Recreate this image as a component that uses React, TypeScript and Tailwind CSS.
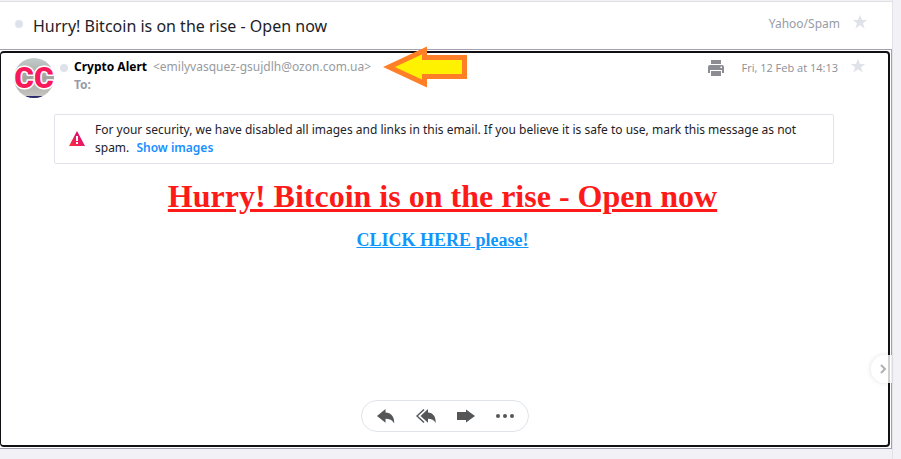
import React from 'react';

function Star() {
  return (
    <svg viewBox="0 0 16 16" className="size-4 fill-[#dfe2e8]" aria-hidden="true">
      <path d="M8 1l2 5h5.200l-4.200 3.200 1.600 5.200L8 11.300l-4.600 3.100L5 9.200.8 6H6z" />
    </svg>
  );
}

function Avatar() {
  return (
    <svg viewBox="0 0 40 40" className="size-10 shrink-0" role="img" aria-label="CC">
      <defs>
        <linearGradient id="avatar-bg" x1="0" y1="0" x2="0" y2="1">
          <stop offset="0" stopColor="#c3cdcd" />
          <stop offset="0.5" stopColor="#a5a39d" />
          <stop offset="1" stopColor="#c9c8c6" />
        </linearGradient>
        <clipPath id="avatar-clip">
          <circle cx="20" cy="20" r="20" />
        </clipPath>
      </defs>
      <g clipPath="url(#avatar-clip)">
        <rect width="40" height="40" fill="url(#avatar-bg)" />
        <rect x="10" y="38" width="20" height="2" fill="#29286b" />
      </g>
      <text
        x="20"
        y="30"
        textAnchor="middle"
        fontSize="30"
        stroke="#fff"
        strokeWidth="3"
        strokeLinejoin="round"
        paintOrder="stroke"
        fill="#f8195b"
        className="font-[Roboto,sans-serif] font-black"
      >
        CC
      </text>
    </svg>
  );
}

function PointerArrow() {
  return (
    <svg viewBox="0 0 84 42" className="absolute -top-[12px] left-full ml-3 h-[42px] w-[84px]" aria-hidden="true">
      <path
        d="M6 21L41.500 4.500v7h40v19h-40v7z"
        fill="#fff200"
        stroke="#ff7f27"
        strokeWidth="5"
      />
    </svg>
  );
}

function Warning() {
  return (
    <svg viewBox="0 0 16 16" className="size-4 shrink-0" aria-hidden="true">
      <defs>
        <linearGradient id="warn" x1="0" y1="1" x2="1" y2="0">
          <stop offset="0" stopColor="#ff333a" />
          <stop offset="1" stopColor="#cc0088" />
        </linearGradient>
      </defs>
      <path d="M8 0l8 15H0z" fill="url(#warn)" />
      <path d="M7 5h2v5H7zM7 11h2v2H7z" fill="#fff" />
    </svg>
  );
}

function Printer() {
  return (
    <svg viewBox="0 0 16 16" className="size-4 fill-[#8b8d92]" aria-hidden="true">
      <path d="M3 0h10v4H3z" />
      <path fillRule="evenodd" d="M2 5h12a2 2 0 012 2v6h-2v-3H2v3H0V7a2 2 0 012-2zm10.500 1.500v1.500h1.500V6.500z" />
      <path d="M3 11h10v5H3z" />
    </svg>
  );
}

function Reply() {
  return (
    <svg viewBox="0 0 18 16" className="h-4 w-[18px] fill-[#555658]" aria-hidden="true">
      <path d="M8.500 1v3.500c5.500.2 9 4 8.700 11-1.700-3.500-4.700-4.700-8.700-4.700v4L0 8z" />
    </svg>
  );
}

function ReplyAll() {
  return (
    <svg viewBox="0 0 20 16" className="h-4 w-5 fill-[#555658]" aria-hidden="true">
      <path d="M12 1v3.500c5 .2 8 4 7.700 10.500-1.700-3.200-4.200-4.200-7.700-4.200v4L4.500 8z" />
      <path d="M8 1.500L1 8l7 6.500" fill="none" stroke="#555658" strokeWidth="1.500" />
    </svg>
  );
}

function Forward() {
  return (
    <svg viewBox="0 0 18 16" className="h-4 w-[18px] fill-[#555658]" aria-hidden="true">
      <path d="M9 1.500L18 8l-9 6.500V12H0V4h9z" />
    </svg>
  );
}

function More() {
  return (
    <svg viewBox="0 0 18 16" className="h-4 w-[18px] fill-[#555658]" aria-hidden="true">
      <circle cx="2" cy="8" r="2" />
      <circle cx="9" cy="8" r="2" />
      <circle cx="16" cy="8" r="2" />
    </svg>
  );
}

export default function App() {
  return (
    <div className="flex min-h-screen bg-[#f2f2f6] font-['Noto_Sans','Open_Sans',sans-serif] text-[12px] text-[#1d2228]">
      <main className="relative flex min-w-0 flex-1 flex-col border-r border-[#e0e4e9] pb-[10px]">
        <header className="mt-px flex h-12 items-start border-t border-[#e0e0e2] bg-white pr-6 pl-[15px]">
          <span className="mt-[18px] size-2 shrink-0 rounded-full bg-[#dfe2ea]" />
          <h1 className="mt-3 ml-[10px] flex-1 text-[16px] leading-6">Hurry! Bitcoin is on the rise - Open now</h1>
          <span className="mt-3 leading-5 text-[#979ba7]">Yahoo/Spam</span>
          <button type="button" aria-label="Star conversation" className="mt-3 ml-3">
            <Star />
          </button>
        </header>

        <div className="flex flex-1 flex-col border-y border-r border-[#a3a1b0] bg-white py-px pr-px">
          <article className="flex flex-1 flex-col rounded-[4px] border-2 border-l border-[#101014]">
            <div className="flex items-start pt-[5px] pr-[22px] pl-[13px]">
              <Avatar />
              <span className="mt-[6px] ml-[6px] size-2 shrink-0 rounded-full bg-[#dfe2ea]" />
              <div className="ml-[6px] flex-1 leading-[18px]">
                <div className="flex">
                  <div className="relative flex gap-[6px]">
                    <strong className="font-bold text-black">Crypto Alert</strong>
                    <span className="text-[#979ba0]">&lt;emilyvasquez-gsujdlh@ozon.com.ua&gt;</span>
                    <PointerArrow />
                  </div>
                </div>
                <div className="font-bold text-[#979ba7]">To:</div>
              </div>
              <button type="button" aria-label="Print" className="mt-[2px]">
                <Printer />
              </button>
              <time className="ml-[18px] font-['Open_Sans',sans-serif] text-[11px] leading-[20px] text-[#8b8f98]">
                Fri, 12 Feb at 14:13
              </time>
              <button type="button" aria-label="Star message" className="ml-3">
                <Star />
              </button>
            </div>

            <div className="mt-4 mr-[54px] ml-[53px] flex h-[50px] items-center rounded-[2px] border border-[#e0e4e9] pr-5 pl-[14px]">
              <Warning />
              <p className="ml-[10px] leading-[18px]">
                For your security, we have disabled all images and links in this email. If you believe it is safe to
                use, mark this message as not spam.{' '}
                <a href="#images" className="ml-1 inline-block font-semibold text-[#188fff]">
                  Show images
                </a>
              </p>
            </div>

            <div className="mt-3 mr-1 text-center font-['Liberation_Serif',serif] font-bold">
              <h2 className="text-[32px] leading-10 text-[#ff1a1a] underline">Hurry! Bitcoin is on the rise - Open now</h2>
              <p className="mt-3 text-[18px] leading-6">
                <a href="#offer" className="text-[#0f96fb] underline">
                  CLICK HERE please!
                </a>
              </p>
            </div>

            <div className="mt-auto mb-[13px] flex justify-center">
              <div className="flex h-8 items-center gap-[21px] rounded-full border border-[#e0e4e9] pr-[14px] pl-[15px]">
                <button type="button" aria-label="Reply">
                  <Reply />
                </button>
                <button type="button" aria-label="Reply all">
                  <ReplyAll />
                </button>
                <button type="button" aria-label="Forward">
                  <Forward />
                </button>
                <button type="button" aria-label="More">
                  <More />
                </button>
              </div>
            </div>
          </article>
        </div>

        <button
          type="button"
          aria-label="Show side panel"
          className="absolute right-0 bottom-[76px] flex h-7 w-[21px] items-center rounded-l-full bg-white/80 pl-2 shadow-[-1px_0_4px_rgba(0,0,0,0.1)]"
        >
          <svg viewBox="0 0 8 10" className="h-[10px] w-2" fill="none" stroke="#b0b0b4" strokeWidth="2" aria-hidden="true">
            <path d="M2 1l4 4-4 4" />
          </svg>
        </button>
      </main>
      <aside className="w-2 shrink-0" />
    </div>
  );
}
